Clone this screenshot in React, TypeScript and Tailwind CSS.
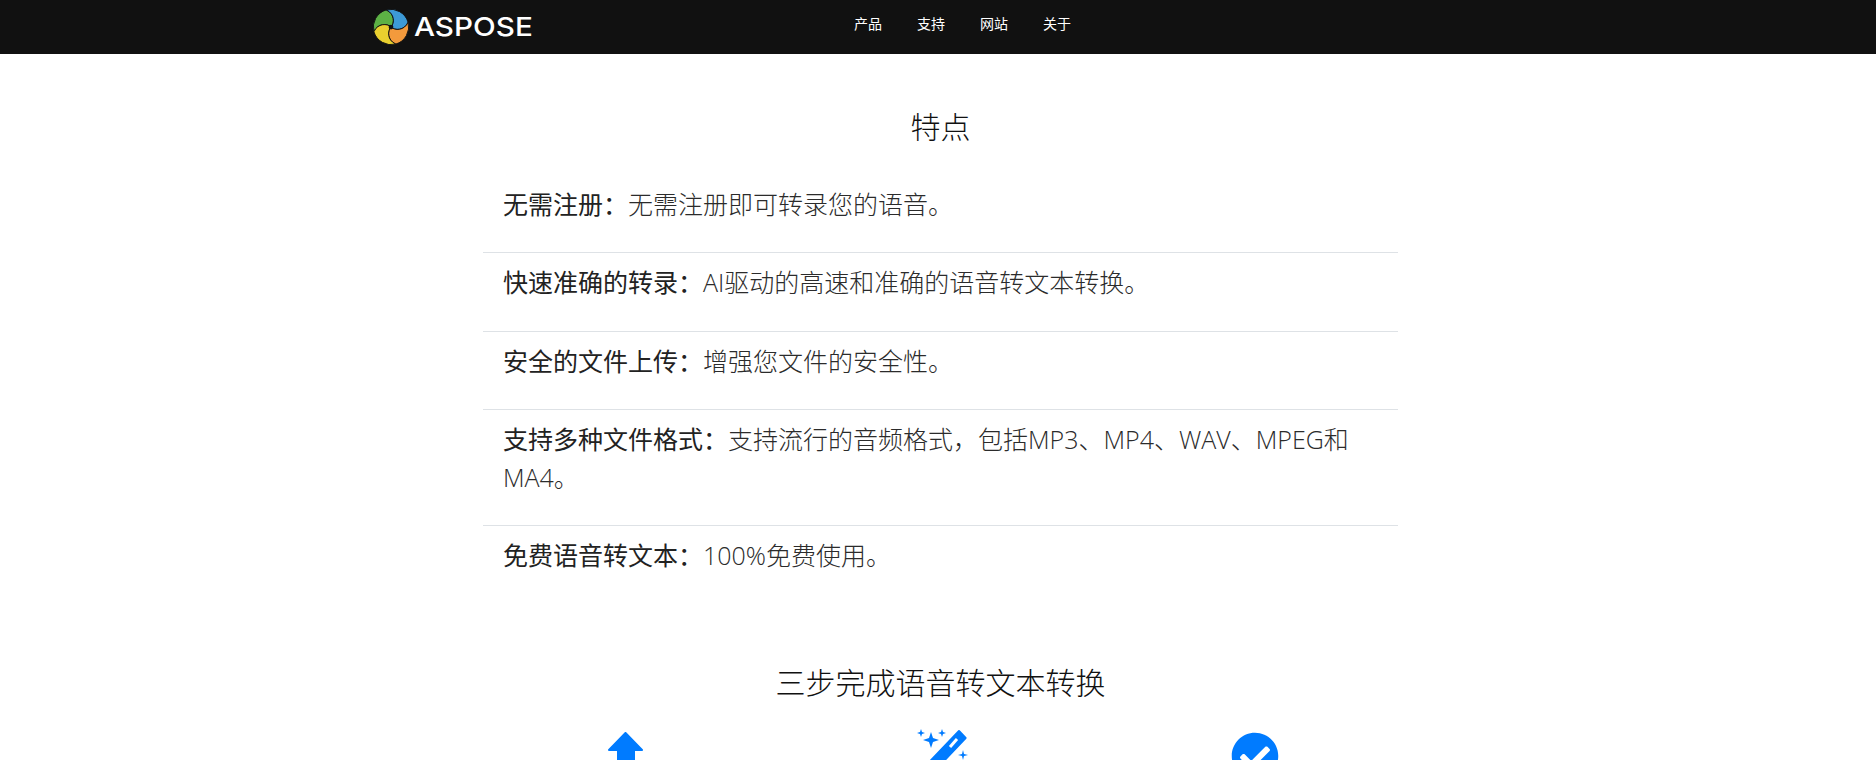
import React from "react";
import { FaCheckCircle } from "react-icons/fa";

const cjk = { fontFamily: '"Open Sans", "Noto Sans CJK SC", sans-serif' };

interface Feature {
  title: string;
  text: string;
}

const features: Feature[] = [
  { title: "无需注册", text: "无需注册即可转录您的语音。" },
  { title: "快速准确的转录", text: "AI驱动的高速和准确的语音转文本转换。" },
  { title: "安全的文件上传", text: "增强您文件的安全性。" },
  { title: "支持多种文件格式", text: "支持流行的音频格式，包括MP3、MP4、WAV、MPEG和MA4。" },
  { title: "免费语音转文本", text: "100%免费使用。" },
];

const navItems = ["产品", "支持", "网站", "关于"];

// one blade of the swirl, rotated four times
const blade = "M20 20C24 16 24 6 15 2A19 19 0 0 0 2 25C6 16 16 16 20 20z";

const Logo: React.FC = () => (
  <div className="flex items-center">
    <svg width="38" height="38" viewBox="0 0 40 40" stroke="#111111" strokeWidth="1">
      <path d={blade} fill="#5cb145" />
      <path d={blade} fill="#3d9ad6" transform="rotate(90 20 20)" />
      <path d={blade} fill="#f39a3c" transform="rotate(180 20 20)" />
      <path d={blade} fill="#e9cf2f" transform="rotate(270 20 20)" />
      <circle cx="20" cy="20" r="2.5" fill="#111111" stroke="none" />
    </svg>
    <span
      className="ml-[4px] block w-[118px] origin-left scale-x-[1.14] text-[26px] font-medium leading-none text-white"
      style={{ fontFamily: "Inter, sans-serif" }}
    >
      ASPOSE
    </span>
  </div>
);

const Header: React.FC = () => (
  <header className="h-[54px] bg-[#111111]">
    <div className="flex h-full pl-[372px]">
      <Logo />
      <nav className="ml-[322px] flex gap-[35px] pt-[14px] text-[14px] leading-[20px] text-white">
        {navItems.map((item) => (
          <span key={item}>{item}</span>
        ))}
      </nav>
    </div>
  </header>
);

const UploadIcon: React.FC = () => (
  <svg width="42" height="42" viewBox="0 0 42 42" fill="#007bff" stroke="#007bff" strokeWidth="2" strokeLinejoin="round">
    <path d="M19.5 1L36 18H28V42H12V18H3z" />
  </svg>
);

const WandIcon: React.FC = () => (
  <svg width="56" height="56" viewBox="0 0 56 56" className="-mt-[3px]" fill="#007bff">
    <path d="M46 2l6.6 7L10 54l-7-7z" stroke="#007bff" strokeWidth="2" strokeLinejoin="round" />
    <path d="M37 18l7-8" stroke="#ffffff" strokeWidth="3" />
    <path d="M18 3l2 6 6 2-6 2-2 6-2-6-6-2 6-2z" />
    <path d="M8 0l1 3 3 1-3 1-1 3-1-3-3-1 3-1z" />
    <path d="M29 0l1 3 3 1-3 1-1 3-1-3-3-1 3-1z" />
    <path d="M50 21l1 4 4 1-4 1-1 4-1-4-4-1 4-1z" />
  </svg>
);

export default function App() {
  return (
    <div className="h-[760px] overflow-hidden bg-white" style={cjk}>
      <Header />
      <main className="ml-[483px] w-[915px]">
        <h2 className="pt-[52px] text-center text-[30px] font-light leading-[42px] text-[#111111]">特点</h2>
        <ul className="mt-[27px]">
          {features.map((f, i) => (
            <li
              key={f.title}
              className={`px-5 pt-[10px] text-[25px] leading-[38px] font-light text-[#2b2b2b] ${
                i === 1 ? "pb-[30px]" : "pb-[29px]"
              } ${i < features.length - 1 ? "border-b border-[#dee2e6]" : ""}`}
            >
              <span className="font-normal text-[#222222]">{f.title}：</span>
              {f.text}
            </li>
          ))}
        </ul>
        <h2 className="mt-[59px] text-center text-[30px] font-light leading-[42px] text-[#111111]">三步完成语音转文本转换</h2>
        <div className="mt-[28px] grid w-[942px] -translate-x-[13px] grid-cols-3 text-[48px] text-[#007bff]">
          <div className="flex justify-center"><UploadIcon /></div>
          <div className="flex justify-center"><WandIcon /></div>
          <div className="flex justify-center"><FaCheckCircle /></div>
        </div>
      </main>
    </div>
  );
}
